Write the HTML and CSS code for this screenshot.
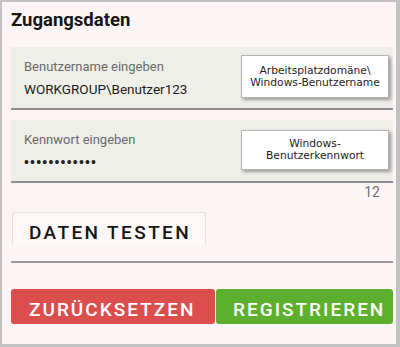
FILE: index.html
```html
<!DOCTYPE html>
<html lang="de">
<head>
<meta charset="utf-8">
<link rel="stylesheet" href="styles.css">
</head>
<body>
<div class="frame">
  <h1 class="title">Zugangsdaten</h1>

  <div class="field">
    <div class="field-label">Benutzername eingeben</div>
    <div class="field-value">WORKGROUP\Benutzer123</div>
    <div class="tip tip-user">Arbeitsplatzdomäne\<br>Windows-Benutzername</div>
  </div>

  <div class="field field-pass">
    <div class="field-label">Kennwort eingeben</div>
    <div class="field-value dots">••••••••••••</div>
    <div class="tip tip-pass">Windows-<br>Benutzerkennwort</div>
  </div>

  <div class="counter">12</div>

  <div class="test-row">
    <button class="btn-test" type="button">DATEN TESTEN</button>
  </div>
  <div class="divider"></div>

  <div class="actions">
    <button class="btn btn-reset" type="button">ZURÜCKSETZEN</button>
    <button class="btn btn-register" type="button">REGISTRIEREN</button>
  </div>
</div>
</body>
</html>
```

FILE: styles.css
```css
* { box-sizing: border-box; }

html, body {
  margin: 0;
  padding: 0;
  background: #fdf5f5;
}

.frame {
  width: 400px;
  height: 347px;
  border-style: solid;
  border-color: #c2c2c2;
  border-width: 2px 4px 3px 2px;
  background: #fdf5f5;
  padding: 6px 3px 0 9px;
  font-family: Roboto, "Liberation Sans", sans-serif;
  overflow: hidden;
}

.title {
  margin: 0;
  font-size: 18.5px;
  line-height: 24px;
  font-weight: 700;
  color: #161616;
}

.field {
  position: relative;
  margin-top: 15px;
  height: 63px;
  background: #efefea;
  border-bottom: 2px solid #8e8e8e;
  padding: 12px 13px 0 13px;
}

.field-pass {
  margin-top: 10px;
}

.field-label {
  font-size: 13px;
  line-height: 16px;
  color: #6a6a6a;
}

.field-value {
  margin-top: 5px;
  font-size: 13.5px;
  line-height: 18px;
  color: #1c1c1c;
}

.dots {
  font-family: "Liberation Sans", sans-serif;
  font-size: 14px;
  letter-spacing: 1.2px;
  color: #222;
}

.tip {
  position: absolute;
  right: 4px;
  width: 148px;
  display: flex;
  align-items: center;
  justify-content: center;
  text-align: center;
  background: #ffffff;
  border: 1px solid #b4b4b4;
  box-shadow: 2px 2px 3px rgba(0, 0, 0, 0.35);
  font-family: "DejaVu Sans", Verdana, sans-serif;
  font-size: 10.7px;
  line-height: 12px;
  color: #1e1e1e;
}

.tip-user {
  top: 8px;
  height: 43px;
}

.tip-pass {
  top: 10px;
  height: 40px;
}

.counter {
  text-align: right;
  padding-right: 13px;
  margin-top: 1px;
  font-size: 14px;
  line-height: 16px;
  color: #707070;
}

.test-row {
  margin-top: 12px;
  padding-left: 1px;
}

.btn-test {
  display: block;
  width: 194px;
  height: 33px;
  margin: 0;
  padding: 8px 0 0 16px;
  text-align: left;
  border: 1px solid #e4e0e0;
  border-bottom: none;
  border-radius: 3px 3px 0 0;
  background: #fdf7f7;
  font-family: Roboto, sans-serif;
  font-size: 19px;
  line-height: 22px;
  font-weight: 500;
  letter-spacing: 2.4px;
  color: #151515;
}

.divider {
  margin-top: 16px;
  height: 2px;
  background: #999999;
}

.actions {
  margin-top: 26px;
  display: grid;
  grid-template-columns: 204px 1fr;
  gap: 1px;
}

.btn {
  height: 35px;
  margin: 0;
  border: none;
  border-radius: 3px;
  padding: 7px 0 0 18px;
  text-align: left;
  font-family: Roboto, sans-serif;
  font-size: 19px;
  line-height: 22px;
  font-weight: 500;
  letter-spacing: 2px;
  color: #ffffff;
}

.btn-reset {
  background: #dc4d4d;
}

.btn-register {
  background: #5cb02d;
  padding-left: 17px;
}
```
